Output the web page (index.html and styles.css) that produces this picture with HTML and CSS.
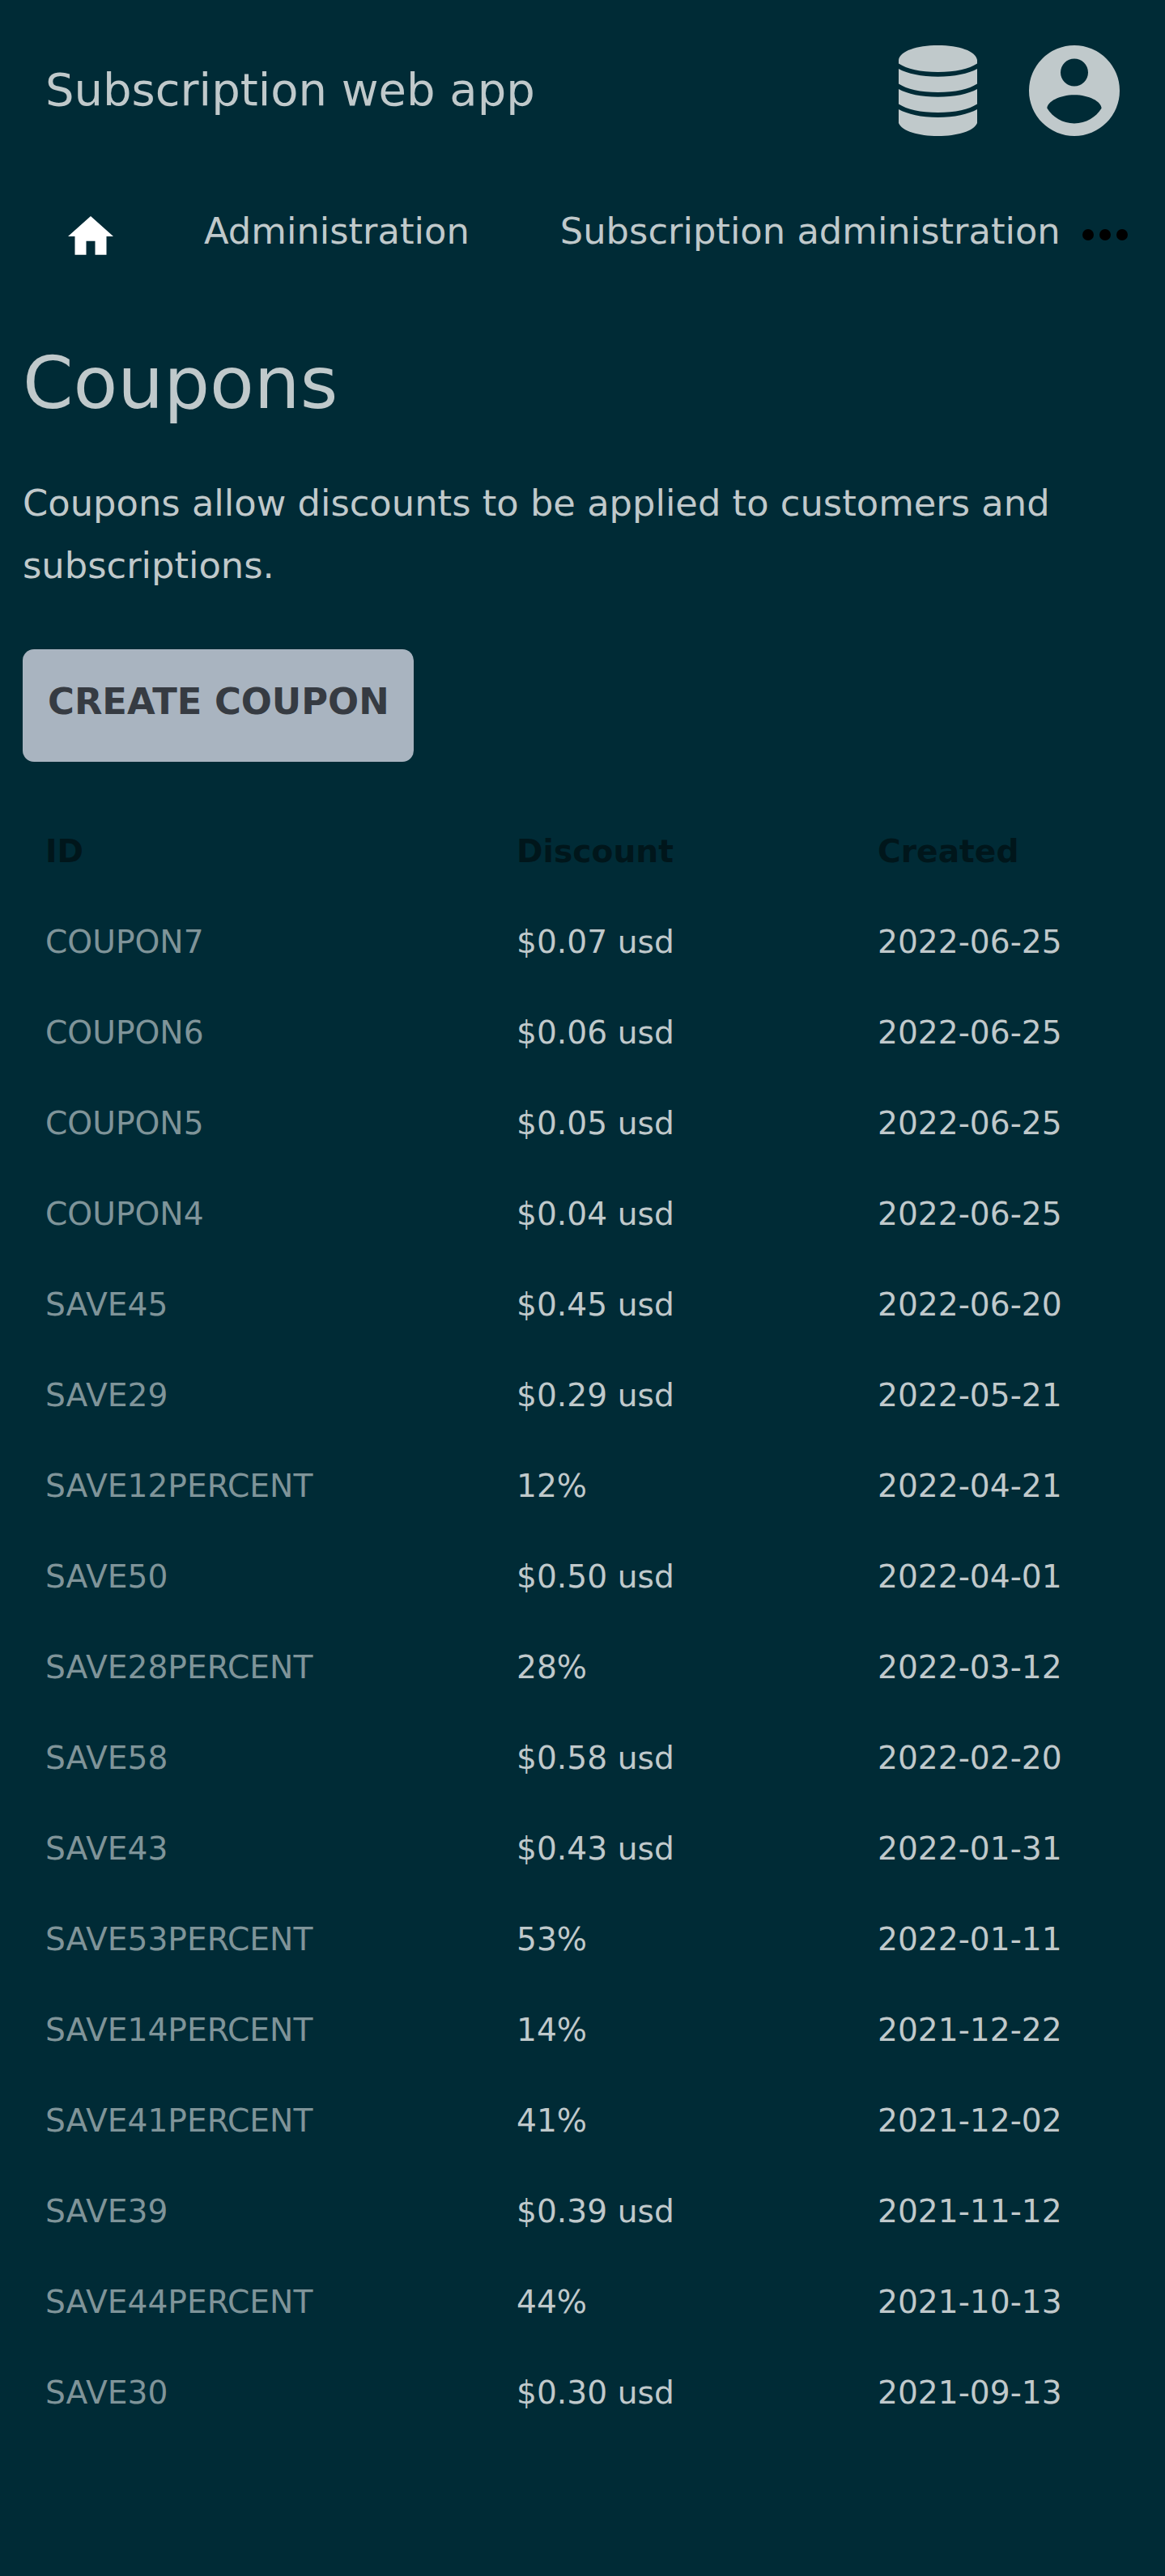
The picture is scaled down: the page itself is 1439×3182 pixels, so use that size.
FILE: index.html
```html
<!DOCTYPE html>
<html lang="en">
<head>
<meta charset="utf-8">
<title>Coupons</title>
<link rel="stylesheet" href="styles.css">
</head>
<body>
<header class="topbar">
  <div class="brand">Subscription web app</div>
  <div class="actions">
    <svg class="icon-db" viewBox="0 0 97 112" aria-label="Administrator"><path d="M0 18C2 7 22 0 48.500 0S95 7 97 18v4.500C87 29 70 33 48.500 33S10 29 0 22.500zM0 29C11 35 28 38.700 48.500 38.700S86 35 97 29v18.500C87 54 70 58 48.500 58S10 54 0 47.500zM0 54C11 60 28 63.800 48.500 63.800S86 60 97 54v18.500C87 79 70 83 48.500 83S10 79 0 72.500zM0 79C11 85 28 89 48.500 89S86 85 97 79v17C93 106 72 112 48.500 112S4 106 0 96z"/></svg>
    <svg class="icon-user" viewBox="0 0 112 112" aria-label="Account"><path fill-rule="evenodd" d="M56 0a56 56 0 1 0 0 112a56 56 0 1 0 0-112zM56 16.500a17 17 0 1 1 0 34a17 17 0 1 1 0-34zM56 61.200c18 0 33.600 8.200 33.600 16.600C82.500 89 70.500 96.500 56 96.500S29.500 89 22.400 77.800C22.400 69.400 38 61.200 56 61.200z"/></svg>
  </div>
</header>
<nav class="nav">
  <a class="home"><svg viewBox="0 0 56 48"><path d="M28 0L56 25H47.500V47.700H33.500V30.700H22.500V47.700H8.500V25H0z"/></svg></a>
  <a>Administration</a>
  <a>Subscription administration</a>
  <svg class="more" viewBox="0 0 56 14"><circle cx="7" cy="7" r="7"/><circle cx="28" cy="7" r="7"/><circle cx="49" cy="7" r="7"/></svg>
</nav>
<main class="main">
  <h1>Coupons</h1>
  <p>Coupons allow discounts to be applied to customers and subscriptions.</p>
  <a class="button">CREATE COUPON</a>
  <table class="coupons">
    <thead><tr><th class="col-id">ID</th><th class="col-discount">Discount</th><th>Created</th></tr></thead>
    <tbody>
      <tr><td><a>COUPON7</a></td><td>$0.07 usd</td><td>2022-06-25</td></tr>
      <tr><td><a>COUPON6</a></td><td>$0.06 usd</td><td>2022-06-25</td></tr>
      <tr><td><a>COUPON5</a></td><td>$0.05 usd</td><td>2022-06-25</td></tr>
      <tr><td><a>COUPON4</a></td><td>$0.04 usd</td><td>2022-06-25</td></tr>
      <tr><td><a>SAVE45</a></td><td>$0.45 usd</td><td>2022-06-20</td></tr>
      <tr><td><a>SAVE29</a></td><td>$0.29 usd</td><td>2022-05-21</td></tr>
      <tr><td><a>SAVE12PERCENT</a></td><td>12%</td><td>2022-04-21</td></tr>
      <tr><td><a>SAVE50</a></td><td>$0.50 usd</td><td>2022-04-01</td></tr>
      <tr><td><a>SAVE28PERCENT</a></td><td>28%</td><td>2022-03-12</td></tr>
      <tr><td><a>SAVE58</a></td><td>$0.58 usd</td><td>2022-02-20</td></tr>
      <tr><td><a>SAVE43</a></td><td>$0.43 usd</td><td>2022-01-31</td></tr>
      <tr><td><a>SAVE53PERCENT</a></td><td>53%</td><td>2022-01-11</td></tr>
      <tr><td><a>SAVE14PERCENT</a></td><td>14%</td><td>2021-12-22</td></tr>
      <tr><td><a>SAVE41PERCENT</a></td><td>41%</td><td>2021-12-02</td></tr>
      <tr><td><a>SAVE39</a></td><td>$0.39 usd</td><td>2021-11-12</td></tr>
      <tr><td><a>SAVE44PERCENT</a></td><td>44%</td><td>2021-10-13</td></tr>
      <tr><td><a>SAVE30</a></td><td>$0.30 usd</td><td>2021-09-13</td></tr>
    </tbody>
  </table>
</main>
</body>
</html>
```
FILE: styles.css
```css
* { box-sizing: border-box; }
body {
  margin: 0;
  min-height: 3182px;
  background: #002b36;
  color: #c0c9cb;
  font: 44.8px/77px "DejaVu Sans", sans-serif;
}
svg { display: block; }
.topbar {
  display: flex;
  justify-content: space-between;
  align-items: center;
  height: 224px;
  padding: 0 56px;
}
.brand { padding-bottom: 3px; font-size: 56px; line-height: 80px; }
.actions { display: flex; gap: 64px; fill: #c0c9cb; }
.icon-db { width: 97px; height: 112px; }
.icon-user { width: 112px; height: 112px; }
.nav {
  display: flex;
  height: 168px;
  padding: 24px 46px 0 84px;
  line-height: 75px;
  white-space: nowrap;
}
.nav a { margin-right: 112px; }
.nav a:nth-of-type(3) { margin-right: 0; }
.nav .home svg { width: 56px; height: 48px; margin-top: 19px; fill: #fff; }
.more { width: 56px; height: 14px; margin: 35px 0 0 auto; flex: none; }
.main { padding: 28px; }
h1 { margin: 0; font-size: 89.6px; line-height: 106px; font-weight: 400; }
p { margin: 57px 0 64.6px; width: 1383px; }
.button {
  display: block;
  width: 483px;
  height: 139.8px;
  padding: 27.4px 0 0 31px;
  border-radius: 14px;
  background: #a9b4c0;
  color: #363b42;
  font-weight: 700;
  line-height: 76px;
  white-space: nowrap;
}
.coupons {
  width: 1383px;
  margin-top: 54.6px;
  border-collapse: collapse;
  table-layout: fixed;
  font-size: 39.2px;
  line-height: 56px;
}
.coupons th, .coupons td { height: 112px; padding: 0 28px; text-align: left; }
.coupons th { color: #00161b; }
.coupons a { color: #7f9499; }
.col-id { width: 582px; }
.col-discount { width: 446px; }
```
